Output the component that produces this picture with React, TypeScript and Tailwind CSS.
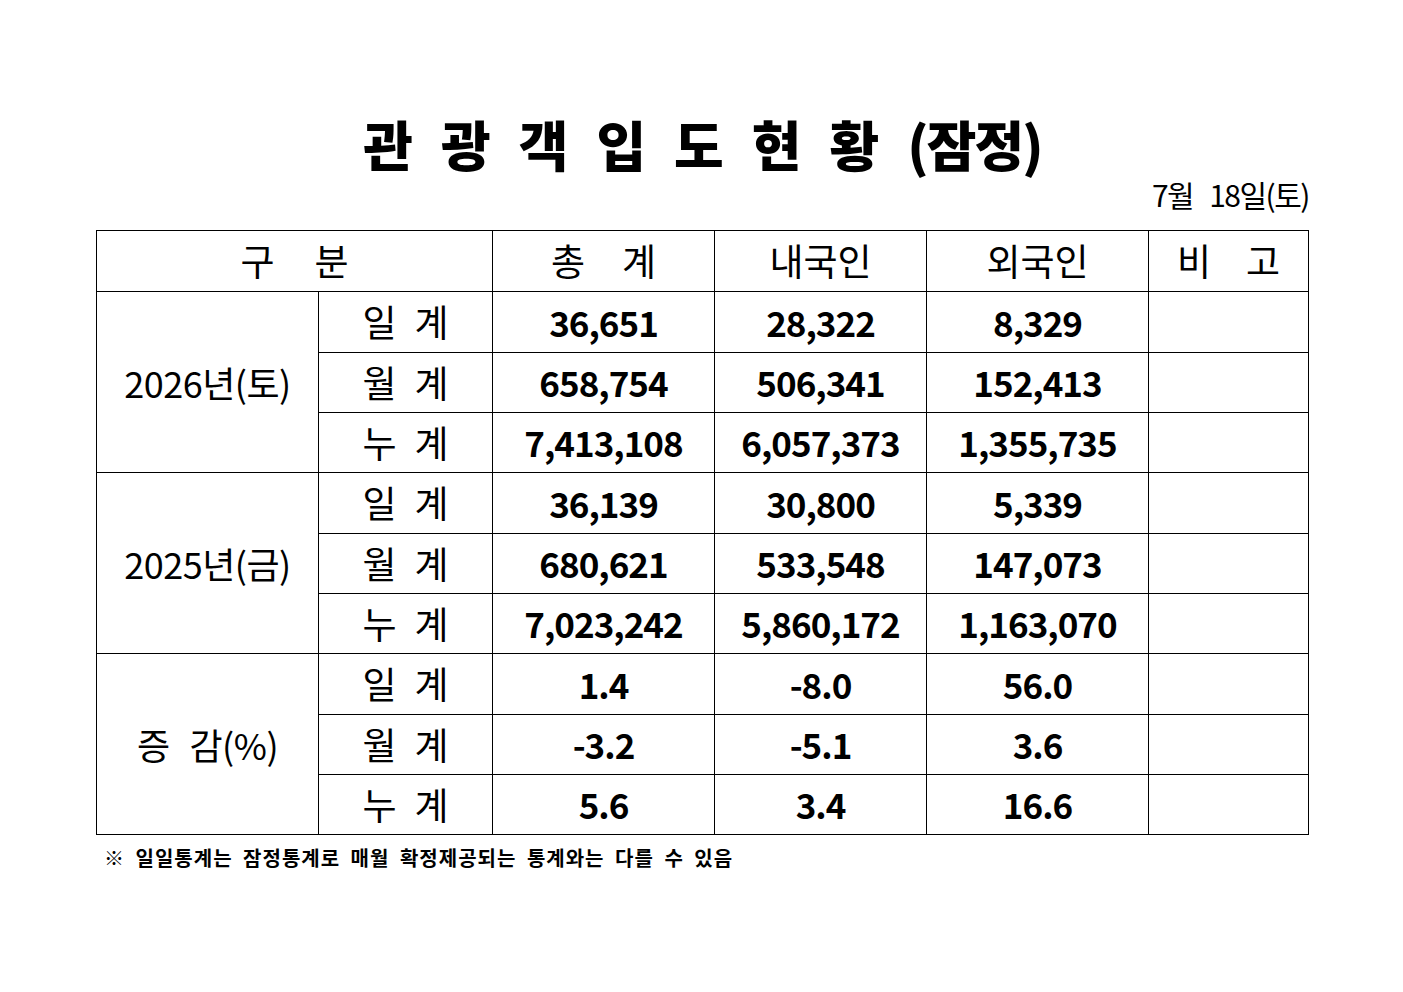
import React from 'react'

const FONT = '"Noto Sans CJK KR", "Noto Sans", sans-serif'

interface Group {
  label: React.ReactNode
  rows: { kind: string; total: string; domestic: string; foreign: string }[]
}

const GROUPS: Group[] = [
  {
    label: '2026년(토)',
    rows: [
      { kind: '일', total: '36,651', domestic: '28,322', foreign: '8,329' },
      { kind: '월', total: '658,754', domestic: '506,341', foreign: '152,413' },
      { kind: '누', total: '7,413,108', domestic: '6,057,373', foreign: '1,355,735' },
    ],
  },
  {
    label: '2025년(금)',
    rows: [
      { kind: '일', total: '36,139', domestic: '30,800', foreign: '5,339' },
      { kind: '월', total: '680,621', domestic: '533,548', foreign: '147,073' },
      { kind: '누', total: '7,023,242', domestic: '5,860,172', foreign: '1,163,070' },
    ],
  },
  {
    label: (
      <span className="flex items-center gap-[20px]">
        <span>증</span>
        <span>감(%)</span>
      </span>
    ),
    rows: [
      { kind: '일', total: '1.4', domestic: '-8.0', foreign: '56.0' },
      { kind: '월', total: '-3.2', domestic: '-5.1', foreign: '3.6' },
      { kind: '누', total: '5.6', domestic: '3.4', foreign: '16.6' },
    ],
  },
]

const TITLE = ['관', '광', '객', '입', '도', '현', '황']

function Spaced({ a, b, gap }: { a: string; b: string; gap: string }) {
  return (
    <span className={`inline-flex items-center justify-center ${gap}`}>
      <span>{a}</span>
      <span>{b}</span>
    </span>
  )
}

export default function App() {
  return (
    <div className="min-h-screen w-full bg-white text-black" style={{ fontFamily: FONT }}>
      <div className="ml-[96px] w-[1213px] pt-[117px]">
        {/* Title */}
        <h1 className="flex items-center justify-center gap-[28px] text-[54px] font-black leading-none">
          {TITLE.map(c => (
            <span key={c}>{c}</span>
          ))}
          <span className="tracking-[-2px]">(잠정)</span>
        </h1>

        {/* Date */}
        <p className="mt-[8px] flex justify-end gap-[16px] text-[30px] leading-none tracking-[-1.5px]">
          <span>7월</span>
          <span>18일(토)</span>
        </p>

        {/* Table */}
        <table className="mt-[21px] w-[1213px] table-fixed border-collapse">
          <colgroup>
            <col className="w-[222px]" />
            <col className="w-[174px]" />
            <col className="w-[222px]" />
            <col className="w-[212px]" />
            <col className="w-[222px]" />
            <col className="w-[160px]" />
          </colgroup>
          <thead>
            <tr className="h-[61px] text-[37px] font-normal">
              <th colSpan={2} className="border border-black font-normal">
                <Spaced a="구" b="분" gap="gap-[40px]" />
              </th>
              <th className="border border-black font-normal">
                <Spaced a="총" b="계" gap="gap-[37px]" />
              </th>
              <th className="border border-black font-normal">내국인</th>
              <th className="border border-black font-normal">외국인</th>
              <th className="border border-black font-normal">
                <Spaced a="비" b="고" gap="gap-[35px]" />
              </th>
            </tr>
          </thead>
          <tbody>
            {GROUPS.map((g, gi) =>
              g.rows.map((r, ri) => (
                <tr key={`${gi}-${ri}`} className={ri === 0 ? 'h-[61px]' : 'h-[60px]'}>
                  {ri === 0 && (
                    <td rowSpan={3} className="border border-black text-center text-[36px] tracking-[-0.5px]">
                      <span className="inline-flex justify-center">{g.label}</span>
                    </td>
                  )}
                  <td className="border border-black text-center text-[37px]">
                    <Spaced a={r.kind} b="계" gap="gap-[18px]" />
                  </td>
                  <td className="border border-black text-center text-[35px] font-bold tracking-[-1px]">{r.total}</td>
                  <td className="border border-black text-center text-[35px] font-bold tracking-[-1px]">{r.domestic}</td>
                  <td className="border border-black text-center text-[35px] font-bold tracking-[-1px]">{r.foreign}</td>
                  <td className="border border-black" />
                </tr>
              ))
            )}
          </tbody>
        </table>

        {/* Footnote */}
        <p className="mt-[13px] pl-[8px] text-[20px] font-bold leading-none tracking-[1px] [word-spacing:5px]">
          ※ 일일통계는 잠정통계로 매월 확정제공되는 통계와는 다를 수 있음
        </p>
      </div>
    </div>
  )
}
